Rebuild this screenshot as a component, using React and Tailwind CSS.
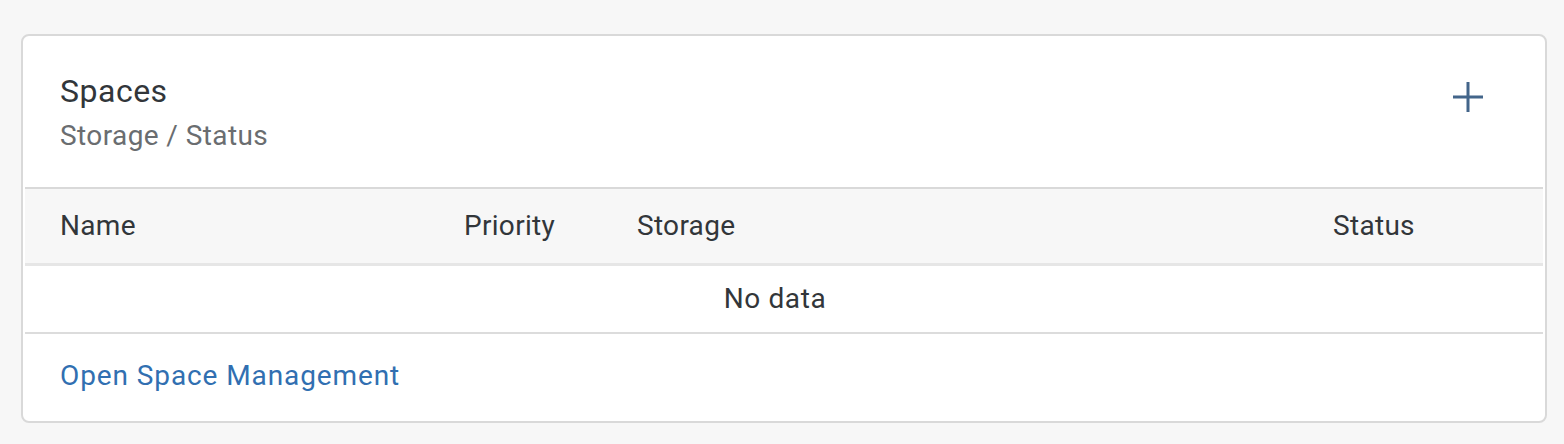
export default function App() {
  const font = { fontFamily: "Roboto, 'Liberation Sans', sans-serif" };
  return (
    <div className="w-[1564px] h-[444px] bg-[#f7f7f7] pt-[34px] pl-[21px]" style={font}>
      <div className="w-[1526px] h-[389px] bg-white border-2 border-[#d9d9d9] rounded-[8px] flex flex-col">
        <div className="flex justify-between pl-[37px] pr-[62px] pt-[35px] pb-[33px]">
          <div className="flex flex-col gap-[7px]">
            <div className="text-[32px] leading-[40px] tracking-[0.5px] text-[#32363a]">Spaces</div>
            <div className="text-[28px] leading-[36px] tracking-[0.4px] text-[#6a6d70]">Storage / Status</div>
          </div>
          <div className="mt-[11px]">
            <svg width="30" height="30" viewBox="0 0 30 30">
              <path d="M15 0V30M0 15H30" stroke="#43658a" strokeWidth="3" fill="none" />
            </svg>
          </div>
        </div>
        <div className="mx-[2px] border-t-2 border-[#d9d9d9] border-b-[3px] border-b-[#e6e6e6] bg-[#f7f7f7] h-[79px] grid grid-cols-[405px_172px_696px_1fr] items-center text-[28px] leading-[36px] tracking-[0.3px] text-[#32363a]">
          <div className="pl-[35px]">Name</div>
          <div className="pl-[34px]">Priority</div>
          <div className="pl-[35px]">Storage</div>
          <div className="pl-[35px]">Status</div>
        </div>
        <div className="mx-[2px] h-[68px] border-b-2 border-[#dcdcdc] flex items-center justify-center pr-[18px] text-[28px] leading-[36px] tracking-[0.6px] text-[#32363a]">
          No data
        </div>
        <div className="pl-[37px] pt-[24px]">
          <a href="#" className="text-[28px] leading-[36px] tracking-[0.9px] text-[#316fb1]">Open Space Management</a>
        </div>
      </div>
    </div>
  );
}
